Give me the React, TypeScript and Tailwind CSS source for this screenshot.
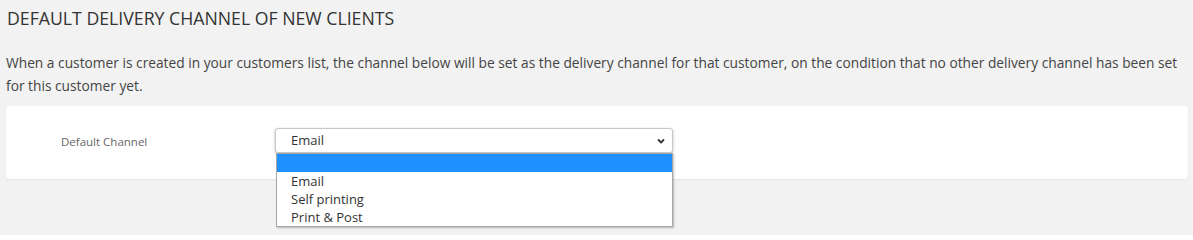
export default function App() {
  const options = ["", "Email", "Self printing", "Print & Post"];
  return (
    <div
      className="w-[1193px] h-[235px] bg-[#f2f2f2] px-[6px] pt-[7px] text-[#333]"
      style={{ fontFamily: '"Open Sans", sans-serif' }}
    >
      <h2 className="text-[17.7px] leading-[22px] pl-[1px] text-[#333]">
        DEFAULT DELIVERY CHANNEL OF NEW CLIENTS
      </h2>
      <p className="mt-[22px] text-[13.75px] leading-[23px] text-[#444]">
        When a customer is created in your customers list, the channel below will be set as the delivery channel for that
        customer, on the condition that no other delivery channel has been set for this customer yet.
      </p>
      <div className="mt-[9px] w-[1182px] h-[73px] bg-white rounded-[4px] shadow-[0_1px_2px_rgba(0,0,0,0.06)] flex items-start pt-[22px]">
        <div className="w-[269px] pl-[55px] mt-[6px] leading-[16px] text-[11.5px] text-[#666]">Default Channel</div>
        <div className="relative">
          <div className="w-[398px] h-[25px] bg-white border border-[#c8c8c8] rounded-[3px] shadow-[0_1px_3px_rgba(0,0,0,0.25)] flex items-center justify-between pl-[15px] pr-[6px] text-[13px] text-[#333]">
            <span>Email</span>
            <svg width="10" height="10" viewBox="0 0 10 10" className="text-[#333]">
              <path d="M2 3.5 L5 6.5 L8 3.5" fill="none" stroke="currentColor" strokeWidth="1.8" />
            </svg>
          </div>
          <div className="absolute left-[1px] top-[25px] w-[397px] bg-white border border-[#a7a7a7] shadow-[1px_1px_2px_rgba(0,0,0,0.25)] text-[13px] text-[#333] z-10">
            {options.map((o, i) => (
              <div
                key={i}
                className={
                  "h-[18px] leading-[18px] pl-[14px] " + (i === 0 ? "bg-[#1e90ff]" : "")
                }
              >
                {o}
              </div>
            ))}
          </div>
        </div>
      </div>
    </div>
  );
}
